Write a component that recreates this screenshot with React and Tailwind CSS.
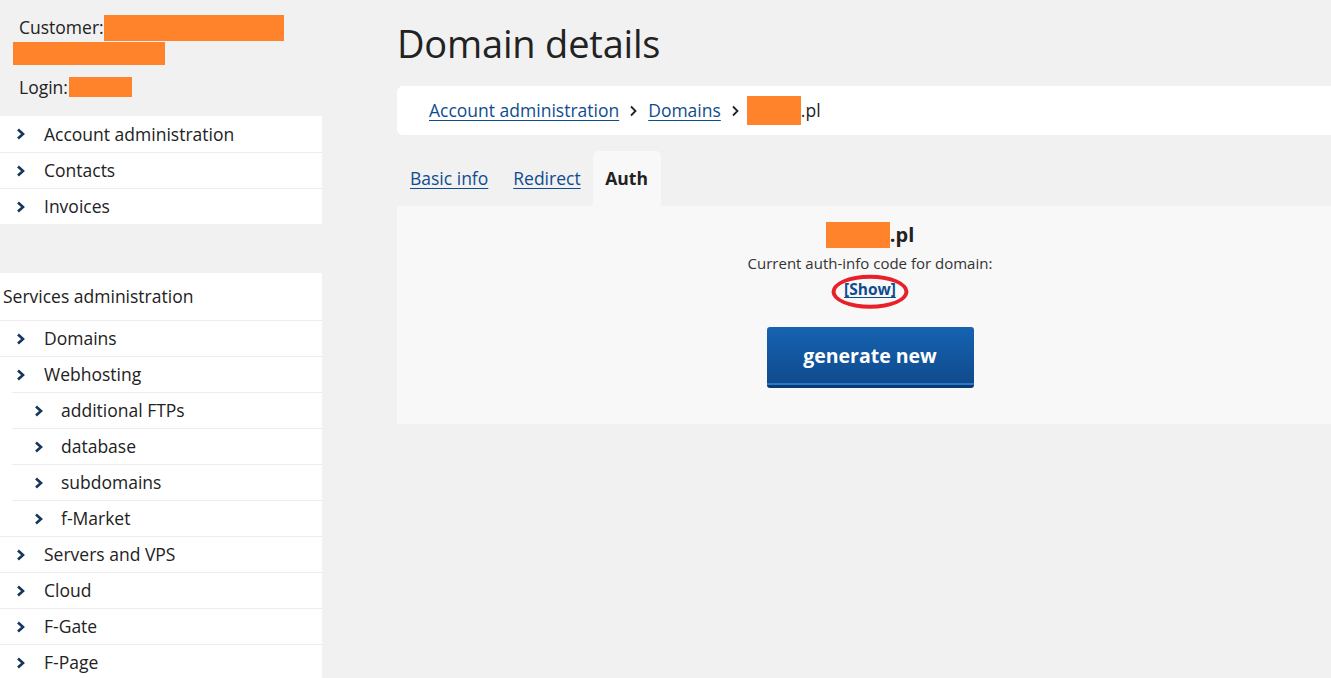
import React from "react";

const Chevron = () => (
  <svg width="10" height="12" viewBox="0 0 10 12" className="shrink-0">
    <path d="M2 1.5 L7 6 L2 10.5" fill="none" stroke="#17365d" strokeWidth="2.6" />
  </svg>
);

const Sep = ({ className }) => (
  <svg width="9" height="12" viewBox="0 0 9 12" className={`shrink-0 ${className}`}>
    <path d="M2 1.5 L6.5 6 L2 10.5" fill="none" stroke="#222" strokeWidth="1.8" />
  </svg>
);

const Redacted = ({ className }) => <span className={`inline-block bg-[#ff832b] ${className}`}></span>;

const MenuRow = ({ label, sub }) => (
  <div className={`h-[36px] shrink-0 flex items-center border-t border-[#ececec] ${sub ? "ml-[12px] pl-[22px]" : "pl-[16px]"}`}>
    <Chevron />
    <span className={`${sub ? "ml-[17px]" : "ml-[18px]"} text-[17.5px] text-[#222]`}>{label}</span>
  </div>
);

const App = () => {
  return (
    <div
      className="w-[1331px] h-[678px] overflow-hidden bg-[#f1f1f1] flex text-[#222]"
      style={{ fontFamily: '"Open Sans", "Noto Sans", sans-serif' }}
    >
      {/* sidebar */}
      <aside className="w-[322px] shrink-0 flex flex-col">
        <div className="pt-[14px] h-[116px] shrink-0 text-[17.5px]">
          <div className="flex items-center pl-[19px] h-[27px]">
            <span>Customer:</span>
            <Redacted className="w-[180px] h-[26px]" />
          </div>
          <div className="pl-[13px] h-[25px] flex items-center">
            <Redacted className="w-[152px] h-[23px]" />
          </div>
          <div className="flex items-center pl-[19px] mt-[10px] h-[22px]">
            <span>Login:</span>
            <Redacted className="w-[63px] h-[20px] ml-[1px]" />
          </div>
        </div>
        <div className="bg-white shrink-0 [&>div:first-child]:border-t-0">
          <MenuRow label="Account administration" />
          <MenuRow label="Contacts" />
          <MenuRow label="Invoices" />
        </div>
        <div className="mt-[49px] shrink-0 bg-white">
          <div className="h-[47px] flex items-center pl-[3px] text-[17.5px]">Services administration</div>
          <MenuRow label="Domains" />
          <MenuRow label="Webhosting" />
          <MenuRow label="additional FTPs" sub />
          <MenuRow label="database" sub />
          <MenuRow label="subdomains" sub />
          <MenuRow label="f-Market" sub />
          <MenuRow label="Servers and VPS" />
          <MenuRow label="Cloud" />
          <MenuRow label="F-Gate" />
          <MenuRow label="F-Page" />
        </div>
      </aside>

      {/* main */}
      <main className="ml-[75px] w-[946px] shrink-0 flex flex-col">
        <h1 className="mt-[18px] h-[50px] text-[38px] leading-[50px] font-normal text-[#222] tracking-[-0.2px]">
          Domain details
        </h1>
        <div className="mt-[18px] h-[49px] bg-white rounded-l-[6px] flex items-center pl-[32px] text-[17.5px]">
          <a href="#" className="text-[#0f4c8f] underline underline-offset-[3px]">Account administration</a>
          <Sep className="mx-[10px]" />
          <a href="#" className="text-[#0f4c8f] underline underline-offset-[3px]">Domains</a>
          <Sep className="ml-[10px] mr-[7px]" />
          <Redacted className="w-[54px] h-[29px]" />
          <span>.pl</span>
        </div>
        <div className="mt-[16px] h-[55px] flex items-end text-[17.5px]">
          <a href="#" className="h-[55px] flex items-center pl-[13px] pr-[12px] text-[#0f4c8f] underline underline-offset-[3px]">Basic info</a>
          <a href="#" className="h-[55px] flex items-center pl-[13px] pr-[12px] text-[#0f4c8f] underline underline-offset-[3px]">Redirect</a>
          <div className="h-[55px] w-[68px] flex items-center justify-center bg-[#f8f8f8] rounded-t-[5px] font-bold text-[#222]">Auth</div>
        </div>
        <div className="h-[218px] bg-[#f8f8f8] flex flex-col items-center">
          <div className="mt-[16px] flex items-center h-[26px] font-bold text-[20px]">
            <Redacted className="w-[64px] h-[26px]" />
            <span>.pl</span>
          </div>
          <div className="mt-[5px] text-[15px] leading-[20px] text-[#333]">Current auth-info code for domain:</div>
          <div className="relative mt-[6px] h-[22px] flex items-center">
            <a href="#" className="text-[15.5px] font-bold text-[#0f4c8f] underline underline-offset-[2px]">[Show]</a>
            <span className="absolute left-1/2 top-1/2 -translate-x-1/2 -translate-y-[45%] w-[77px] h-[34px] rounded-[50%] border-[4px] border-[#e8202a]"></span>
          </div>
          <button className="mt-[26px] w-[207px] h-[61px] rounded-[3px] bg-gradient-to-b from-[#1763b2] to-[#0f4a8c] border-b-[3px] border-[#0a3a72] shadow-[inset_0_-2px_0_#2a78c8] text-white font-bold text-[19.5px]">
            generate new
          </button>
        </div>
      </main>
    </div>
  );
};

export default App;
